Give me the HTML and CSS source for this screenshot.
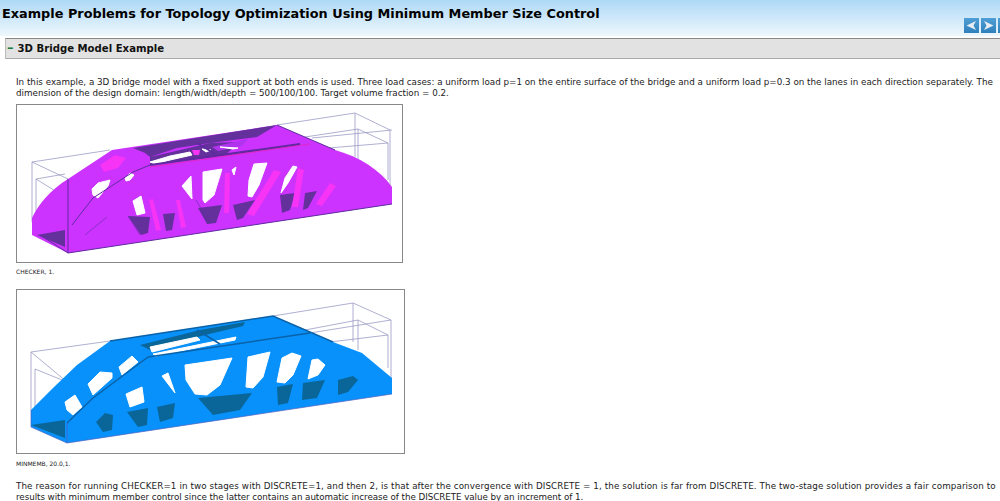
FILE: index.html
```html
<!DOCTYPE html>
<html lang="en">
<head>
<meta charset="utf-8">
<title>Example Problems for Topology Optimization Using Minimum Member Size Control</title>
<link rel="stylesheet" href="styles.css">
</head>
<body>
<header class="top">
  <h1 class="title">Example Problems for Topology Optimization Using Minimum Member Size Control</h1>
  <nav class="nav">
    <a class="btn"><svg viewBox="0 0 15 15" class="arrow"><path d="M2.5 7.5 12 3 9.5 7.5 12 12Z"/></svg></a>
    <a class="btn"><svg viewBox="0 0 15 15" class="arrow"><path d="M12.5 7.5 3 3 5.500 7.500 3 12Z"/></svg></a>
    <a class="btn"></a>
  </nav>
</header>
<h2 class="section"><span class="dash">–</span>3D Bridge Model Example</h2>
<main class="content">
  <p class="para">In this example, a 3D bridge model with a fixed support at both ends is used. Three load cases: a uniform load p=1 on the entire surface of the bridge and a uniform load p=0.3 on the lanes in each direction separately. The dimension of the design domain: length/width/depth = 500/100/100. Target volume fraction = 0.2.</p>
  <figure class="fig">
    <svg class="shot shot-a" viewBox="17 105 385 157">
      <path class="wire" d="M32 162 110 150M32 162V222M32 162 68 179M36 179V217M36 179 65 174M36 179 65 197M277 125 355 113 390 130V187M355 113V157M305 137 358 129 388 143V180M358 129V160M312 138 392 130M305 150 388 143"/>
      <path class="p-body" d="M32 235 68 253 392 204V187C380 170 360 157 335 150L277 125 112 150 68 179C50 190 38 205 32 218Z"/>
      <path class="p-dark" d="M37 235 65 230V247ZM128 216 150 217 148 233 141 235ZM163 214 175 213 172 230 166 231ZM198 208 222 205 216 223 207 224ZM233 205 255 200 243 218 237 220ZM280 195 295 193 290 210 282 213ZM305 193 317 191 308 208 303 210ZM133 148 277 125 257 137 210 143 177 148 150 157 145 153ZM150 157 210 143 240 142 225 155 150 165Z"/>
      <path class="p-patch" d="M212 147 248 139 242 146 218 151Z"/>
      <path class="p-hole" d="M92 189 98 183 110 180 108 186 98 198 93 195ZM125 178 130 173 134 175 130 180 126 181ZM133 201 141 196 145 213 137 215ZM182 186 191 176 192 199ZM203 172 222 169 214 195 205 203 203 200ZM232 170 236 167 234 175ZM254 164 267 163 259 185 252 197 248 196 249 180ZM293 166 297 167 288 183 281 193 285 178ZM150 162 170 156 190 152 192 155 170 160 155 164ZM202 149 211 150 206 152ZM220 147 238 148 233 149Z"/>
      <path class="p-bright" d="M225 173 230 173 229 213 224 213ZM274 170 281 172 254 216 247 214ZM298 168 304 170 298 207 292 207ZM330 183 336 186 322 206 316 204ZM149 200 153 199 161 230 156 231ZM176 200 180 200 186 227 181 228ZM100 165 115 155 126 158 118 168 104 172ZM192 150 200 150 199 155 194 155Z"/>
      <path class="p-deck" d="M150 165 300 144M197 143 217 155"/>
      <path class="p-red" d="M150 167 310 144"/>
      <path class="p-line" d="M150 165 133 172 93 198 72 225M277 125 335 150M68 179V253M40 235 68 253 392 204"/>
      <path class="p-thin" d="M85 235 107 217M128 216 140 235M196 200 210 224"/>
    </svg>
  </figure>
  <p class="caption">CHECKER, 1.</p>
  <figure class="fig fig-b">
    <svg class="shot shot-b" viewBox="17 290 387 163">
      <path class="wire" d="M31 352 110 341M31 352V410M31 352 67 382M35 369V412M35 369 67 382 112 368M273 316 353 303 391 320V378M353 303V342M305 330 358 320 388 335V368M358 320V350M310 333 391 320M305 345 388 335"/>
      <path class="b-body" d="M31 427 67 443 392 394V378L362 353 333 342 273 316 110 341 77 365 53 388 31 410Z"/>
      <path class="b-dark" d="M31 425 65 420V438ZM96 422 105 413 113 415 112 430 103 432ZM127 412 148 408 147 425 138 427ZM157 407 175 403 173 418 160 422ZM198 398 252 393 240 410 213 415ZM277 387 293 384 288 403 278 405ZM303 383 325 380 317 398 302 400ZM338 380 353 376 358 380 348 392 338 395ZM140 345 200 330 245 322 243 326 205 335 150 350Z"/>
      <path class="b-hole" d="M65 402 75 395 82 407 73 415 67 410ZM88 384 100 372 112 373 112 378 93 395ZM119 367 132 356 138 362 122 375ZM126 394 142 387 144 402 130 407ZM162 376 168 373 175 393ZM185 365 232 358 220 385 207 395 195 394 186 380ZM248 357 270 352 263 377 253 388 246 387ZM282 358 292 353 301 356 293 375 285 383 277 382ZM312 360 318 359 325 365 318 375 308 379ZM150 347 197 337 200 340 152 352ZM153 354 236 337 235 340 156 356Z"/>
      <path class="b-line" d="M148 357 310 333M197 330 220 344M148 357 140 363 93 398 67 423M110 341 273 316 333 342"/>
      <path class="b-edge" d="M31 427 67 443 392 394M31 410 31 427M67 423V443"/>
    </svg>
  </figure>
  <p class="caption caption-b">MINMEMB, 20.0,1.</p>
  <p class="para para-last"><span class="line line-wide">The reason for running CHECKER=1 in two stages with DISCRETE=1, and then 2, is that after the convergence with DISCRETE = 1, the solution is far from DISCRETE. The two-stage solution provides a fair comparison to</span> <span class="line line-tight">results with minimum member control since the latter contains an automatic increase of the DISCRETE value by an increment of 1.</span></p>
</main>
</body>
</html>
```
FILE: styles.css
```css
html, body { margin: 0; padding: 0; height: 501px; overflow: hidden; background: #fff; }
body { font-family: "DejaVu Sans", Verdana, sans-serif; color: #222; }
.top {
  height: 36px; display: flex; justify-content: space-between; align-items: flex-start;
  padding-left: 2px; box-sizing: border-box;
  background: linear-gradient(#aed9f6, #eef7fd);
}
.title { margin: 6px 0 0; font-size: 12.85px; line-height: 16px; font-weight: bold; color: #000; white-space: nowrap; }
.nav { display: flex; gap: 2px; margin: 18px -13px 0 0; flex: none; }
.btn { display: block; width: 15px; height: 15px; background: linear-gradient(#4f9fd6, #2f7fbc); }
.arrow { display: block; width: 15px; height: 15px; fill: #e8eef4; }
.section {
  margin: 2px 0 0 5px; height: 21px; box-sizing: border-box;
  background: #e2e2e2; border-top: 1px solid #8a8a8a; border-left: 1px solid #bbb; border-bottom: 1px solid #aaa;
  font-size: 10.15px; line-height: 19px; font-weight: bold; color: #111; padding-left: 1px;
}
.dash { color: #1c7a3a; font-size: 13px; line-height: 15px; margin-right: 4px; }
.content { padding-left: 16px; }
.para { margin: 18px 0 0; font-size: 8.76px; line-height: 11px; }
.line { display: block; white-space: nowrap; }
.line-wide { letter-spacing: 0.098px; }
.line-tight { letter-spacing: -0.063px; }
.fig { margin: 5px 0 0; width: 387px; height: 159px; border: 1px solid #888; box-sizing: border-box; background: #fff; }
.fig-b { width: 389px; height: 165px; margin-top: 13px; }
.shot { display: block; width: 100%; height: 100%; filter: blur(0.45px); }
.caption { margin: 5px 0 0; font-size: 6px; line-height: 8px; height: 8px; color: #222; }
.caption-b { margin-top: 6px; }
.para-last { margin-top: 13px; }
.wire { fill: none; stroke: #9b9bc6; stroke-width: 0.8; }
.p-body { fill: #cc33ff; }
.p-patch { fill: #b033ee; }
.p-dark { fill: #64309c; }
.p-hole, .b-hole { fill: #fff; stroke: #fff; stroke-width: 1; stroke-linejoin: round; }
.p-bright { fill: #f733f5; }
.p-deck { fill: none; stroke: #5f2aa0; stroke-width: 2; }
.p-red { fill: none; stroke: #f0209f; stroke-width: 0.6; }
.p-line { fill: none; stroke: #5f2aa0; stroke-width: 1; }
.p-thin { fill: none; stroke: #5f2aa0; stroke-width: 0.6; }
.b-body { fill: #0891fb; }
.b-dark { fill: #0a6698; }
.b-line { fill: none; stroke: #0a62a8; stroke-width: 1.5; }
.b-edge { fill: none; stroke: #4a5fc0; stroke-width: 0.7; }
```
